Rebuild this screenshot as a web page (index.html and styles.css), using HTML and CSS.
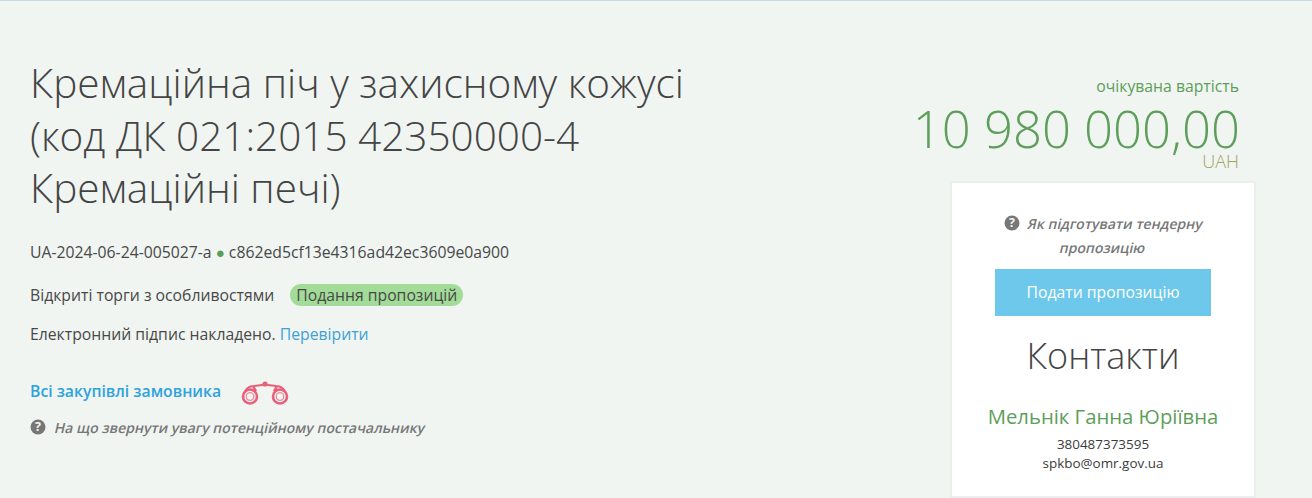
FILE: index.html
```html
<!DOCTYPE html>
<html lang="uk">
<head>
<meta charset="utf-8">
<title>Кремаційна піч</title>
<link rel="stylesheet" href="styles.css">
</head>
<body>
<main class="page">
  <section class="info">
    <h1 class="title">Кремаційна піч у захисному кожусі<br>(код ДК 021:2015 42350000-4<br>Кремаційні печі)</h1>
    <p class="ids">UA-2024-06-24-005027-a <span class="dot">●</span> c862ed5cf13e4316ad42ec3609e0a900</p>
    <p class="type"><span>Відкриті торги з особливостями</span><span class="status">Подання пропозицій</span></p>
    <p class="sign">Електронний підпис накладено. <a class="link" href="#">Перевірити</a></p>
    <p class="all"><a class="all-link" href="#">Всі закупівлі замовника</a>
      <svg class="binoc" width="48" height="28" viewBox="0 0 48 28" aria-hidden="true">
        <g fill="none" stroke="#e8607a">
          <circle cx="9" cy="18.5" r="7" stroke-width="2.6"/>
          <circle cx="9" cy="18.5" r="3.8" stroke-width="1.3" stroke="#ee8a9c"/>
          <circle cx="39" cy="18.5" r="7" stroke-width="2.6"/>
          <circle cx="39" cy="18.5" r="3.8" stroke-width="1.3" stroke="#ee8a9c"/>
          <path d="M4 13 C6 10 9 8 13 8 L21 7 L24 6 L27 7 L35 8 C39 8 42 10 44 13" stroke-width="1.8"/>
          <path d="M12 8 L15 13 M36 8 L33 13" stroke-width="2.4"/>
        </g>
        <circle cx="24" cy="6" r="2.6" fill="#e8607a"/>
      </svg>
    </p>
    <p class="hint hint-left"><svg class="q" viewBox="0 0 16 16" aria-hidden="true"><circle cx="8" cy="8" r="7.5" fill="#777"/><text x="8" y="12.3" text-anchor="middle" class="q-mark">?</text></svg><em class="skew">На що звернути увагу потенційному постачальнику</em></p>
  </section>
  <aside class="side">
    <div class="price">
      <div class="price-label">очікувана вартість</div>
      <div class="price-value">10 980 000,00</div>
      <div class="price-cur">UAH</div>
    </div>
    <div class="card">
      <p class="hint hint-card"><svg class="q" viewBox="0 0 16 16" aria-hidden="true"><circle cx="8" cy="8" r="7.5" fill="#777"/><text x="8" y="12.3" text-anchor="middle" class="q-mark">?</text></svg><em class="skew">Як підготувати тендерну</em> <em class="skew">пропозицію</em></p>
      <a class="btn" href="#">Подати пропозицію</a>
      <h2 class="contacts">Контакти</h2>
      <div class="person">Мельнік Ганна Юріївна</div>
      <div class="detail">380487373595</div>
      <div class="detail">spkbo@omr.gov.ua</div>
    </div>
  </aside>
</main>
</body>
</html>
```
FILE: styles.css
```css
* { box-sizing: border-box; }
html, body { margin: 0; height: 498px; overflow: hidden; }
body {
  background: #f0f5f2;
  border-top: 1px solid #c5dbe6;
  font-family: "Open Sans", sans-serif;
  font-size: 15.75px;
  color: #484848;
}
.page {
  display: flex;
  justify-content: space-between;
  padding: 56px 56px 0 30px;
}
.info { width: 700px; }
.title {
  margin: 0;
  font-size: 40.5px;
  font-weight: 300;
  line-height: 52.65px;
  color: #444;
}
.ids { margin: 27px 0 0; line-height: 20px; }
.dot { color: #5a9e58; font-size: 15px; vertical-align: 0; }
.type { margin: 22px 0 0; line-height: 20px; display: flex; align-items: center; }
.status {
  margin-left: 16px;
  padding: 0 6px;
  background: #a2dc98;
  border-radius: 11px;
  line-height: 22px;
}
.sign { margin: 18px 0 0; line-height: 20px; }
.link { color: #3f9fd8; text-decoration: none; }
.all { margin: 33px 0 0; height: 28px; display: flex; align-items: center; }
.all-link { color: #2ea3dc; font-weight: 600; text-decoration: none; }
.binoc { margin-left: 20px; margin-top: 2px; }
.hint { color: #777; line-height: 24px; font-weight: 600; font-size: 14px; }
.skew { display: inline-block; font-style: normal; transform: skewX(-13deg); }
.q { width: 16px; height: 16px; vertical-align: -2px; margin-right: 8px; }
.q-mark { font: 700 12.5px "Open Sans", sans-serif; fill: #f0f5f2; }
.hint-left { margin: 11px 0 0; }
.hint-left .q { margin-right: 9px; }
.side { width: 306px; }
.price { text-align: right; padding-right: 16px; margin-left: -60px; }
.price-label { margin-top: 19px; margin-right: 1px; color: #5d9e5a; line-height: 20px; }
.price-value { font-size: 50.8px; font-weight: 300; line-height: 60px; color: #5d9e5a; margin-top: 3px; white-space: nowrap; }
.price-cur { color: #a3a05e; font-size: 18px; font-weight: 300; line-height: 20px; margin-top: -8px; margin-right: 1px; }
.card {
  background: #fff;
  border: 2px solid #eaeeec;
  height: 317px;
  padding: 0 43px;
  margin-top: 10px;
  text-align: center;
}
.hint-card { margin: 29px 0 0; }
.btn {
  display: block;
  height: 47px;
  line-height: 47px;
  margin-top: 9px;
  background: #6dc8ec;
  color: #fff;
  text-decoration: none;
}
.contacts { margin: 16px -40px 0; font-size: 36px; font-weight: 300; line-height: 48px; color: #444; }
.person { margin: 23px -40px 0; font-size: 20.3px; line-height: 26px; color: #5d9e5a; white-space: nowrap; }
.detail { font-size: 13.45px; line-height: 19px; color: #3c3c3c; }
.person + .detail { margin-top: 6px; }
```
